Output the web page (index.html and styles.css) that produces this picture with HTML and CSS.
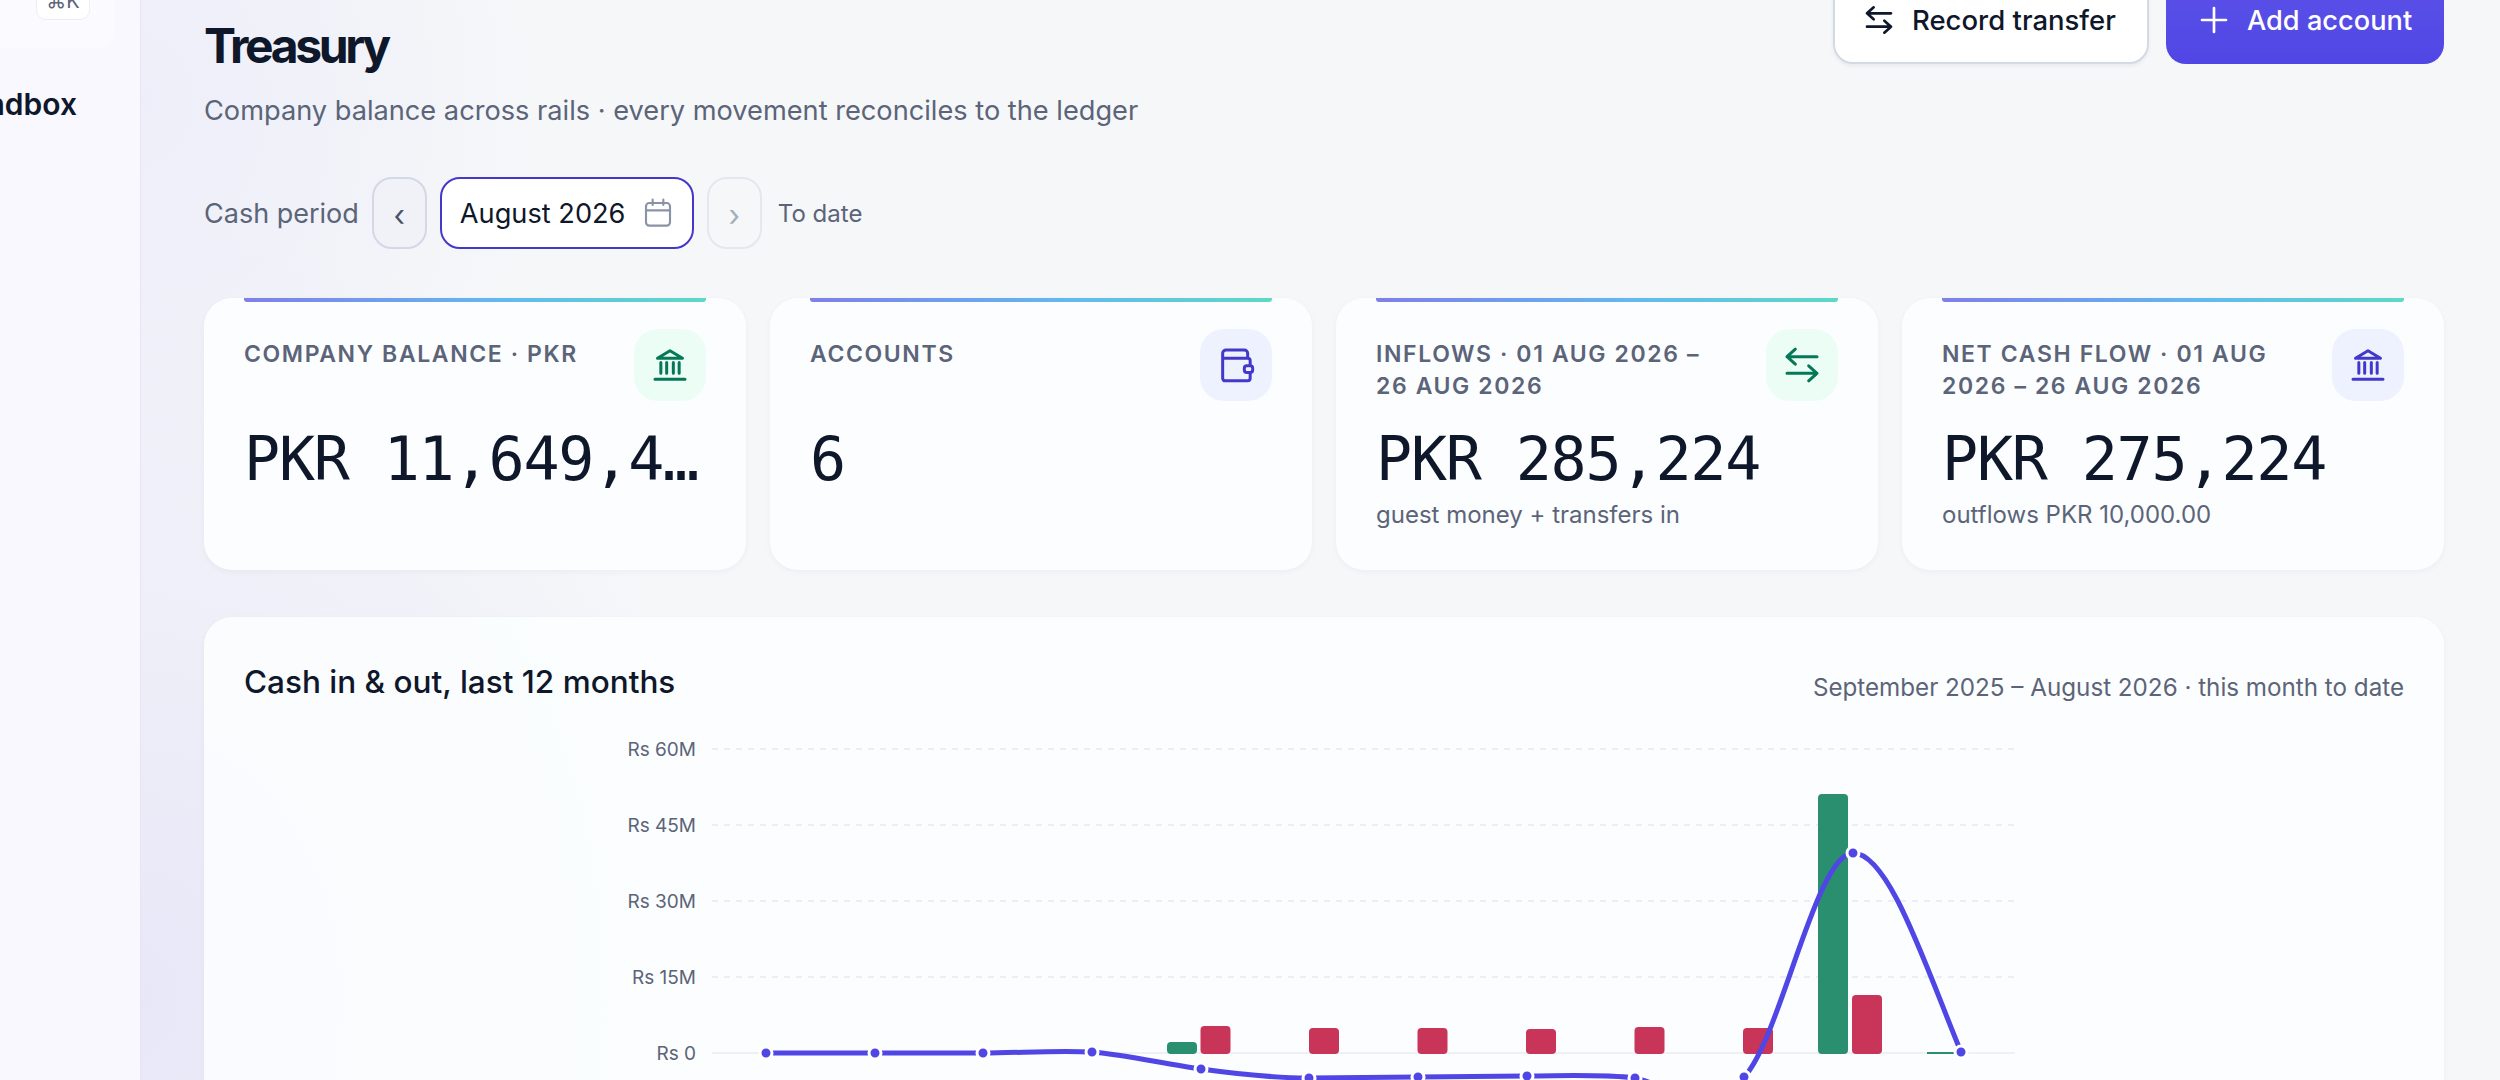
FILE: index.html
```html
<!DOCTYPE html>
<html lang="en">

<head>
  <meta charset="UTF-8">
  <meta name="viewport" content="width=device-width, initial-scale=1.0">
  <title>Treasury</title>
  <link rel="stylesheet" href="styles.css">
</head>

<body>
  <div class="app">
    <aside class="sidebar">
      <div class="search-box">
        <span class="kbd">⌘K</span>
      </div>
      <div class="workspace">Sandbox</div>
    </aside>

    <main class="main">
      <div class="page-head">
        <div>
          <h1>Treasury</h1>
          <p class="subtitle">Company balance across rails · every movement reconciles to the ledger</p>
        </div>
        <div class="actions">
          <button class="btn btn-light">
            <svg class="btn-icon" viewBox="0 0 24 24">
              <path d="M21 7H3M8 2.500 3 7l5 4.500M3 17h18M16 12.500l5 4.500-5 4.500" />
            </svg>
            Record transfer
          </button>
          <button class="btn btn-primary">
            <svg class="btn-icon" viewBox="0 0 24 24">
              <path d="M12 3v18M3 12h18" />
            </svg>
            Add account
          </button>
        </div>
      </div>

      <div class="period-row">
        <span class="period-label">Cash period</span>
        <button class="nav-btn">‹</button>
        <div class="date-box">
          August 2026
          <svg class="cal-icon" viewBox="0 0 24 24">
            <rect x="3" y="4.500" width="18" height="17" rx="2.500" />
            <path d="M3 10h18M8 2v4M16 2v4" />
          </svg>
        </div>
        <button class="nav-btn nav-disabled">›</button>
        <span class="period-note">To date</span>
      </div>

      <section class="stats">
        <div class="stat">
          <div class="stat-strip"></div>
          <div class="stat-body">
            <div class="stat-head">
              <div class="stat-label">COMPANY BALANCE · PKR</div>
              <div class="stat-icon icon-green">
                <svg viewBox="0 0 24 24">
                  <path class="roof" d="M12 3.500 19.500 8h-15z" />
                  <path d="M6.500 10.500V17M10 10.500V17M14 10.500V17M17.500 10.500V17M3 20.500h18" />
                </svg>
              </div>
            </div>
            <div class="stat-value">PKR 11,649,444</div>
          </div>
        </div>

        <div class="stat">
          <div class="stat-strip"></div>
          <div class="stat-body">
            <div class="stat-head">
              <div class="stat-label">ACCOUNTS</div>
              <div class="stat-icon icon-indigo">
                <svg viewBox="0 0 24 24">
                  <path d="M4 8h15a1.500 1.500 0 0 1 1.500 1.500V20a1.500 1.500 0 0 1-1.500 1.500H5.500A1.500 1.500 0 0 1 4 20V5a2 2 0 0 1 2-2h11a2 2 0 0 1 2 2v3" />
                  <rect class="clasp" x="17" y="12.500" width="5" height="4" rx="1.500" />
                </svg>
              </div>
            </div>
            <div class="stat-value">6</div>
          </div>
        </div>

        <div class="stat">
          <div class="stat-strip"></div>
          <div class="stat-body">
            <div class="stat-head">
              <div class="stat-label">INFLOWS · 01 AUG 2026 – 26 AUG 2026</div>
              <div class="stat-icon icon-green">
                <svg viewBox="0 0 24 24">
                  <path d="M21 7H3M8 2.500 3 7l5 4.500M3 17h18M16 12.500l5 4.500-5 4.500" />
                </svg>
              </div>
            </div>
            <div class="stat-value">PKR 285,224</div>
            <div class="stat-sub">guest money + transfers in</div>
          </div>
        </div>

        <div class="stat">
          <div class="stat-strip"></div>
          <div class="stat-body">
            <div class="stat-head">
              <div class="stat-label">NET CASH FLOW · 01 AUG 2026 – 26 AUG 2026</div>
              <div class="stat-icon icon-indigo">
                <svg viewBox="0 0 24 24">
                  <path class="roof" d="M12 3.500 19.500 8h-15z" />
                  <path d="M6.500 10.500V17M10 10.500V17M14 10.500V17M17.500 10.500V17M3 20.500h18" />
                </svg>
              </div>
            </div>
            <div class="stat-value">PKR 275,224</div>
            <div class="stat-sub">outflows PKR 10,000.00</div>
          </div>
        </div>
      </section>

      <section class="chart-card">
        <div class="chart-head">
          <h2>Cash in &amp; out, last 12 months</h2>
          <span class="chart-range">September 2025 – August 2026 · this month to date</span>
        </div>
        <svg class="chart" viewBox="244 720 2160 400">
          <g class="grid">
            <line x1="712" x2="2015" y1="749" y2="749" />
            <line x1="712" x2="2015" y1="825" y2="825" />
            <line x1="712" x2="2015" y1="901" y2="901" />
            <line x1="712" x2="2015" y1="977" y2="977" />
          </g>
          <line class="baseline" x1="712" x2="2015" y1="1053" y2="1053" />
          <g class="ticks">
            <text x="696" y="756">Rs 60M</text>
            <text x="696" y="832">Rs 45M</text>
            <text x="696" y="908">Rs 30M</text>
            <text x="696" y="984">Rs 15M</text>
            <text x="696" y="1060">Rs 0</text>
          </g>
          <g class="bars-in">
            <rect x="1167" y="1042" width="30" height="12" rx="4" />
            <rect x="1818" y="794" width="30" height="260" rx="4" />
            <rect x="1927" y="1052" width="30" height="2" />
          </g>
          <g class="bars-out">
            <rect x="1200.500" y="1026" width="30" height="28" rx="4" />
            <rect x="1309" y="1028" width="30" height="26" rx="4" />
            <rect x="1417.500" y="1028" width="30" height="26" rx="4" />
            <rect x="1526" y="1029" width="30" height="25" rx="4" />
            <rect x="1634.500" y="1027" width="30" height="27" rx="4" />
            <rect x="1743" y="1028" width="30" height="26" rx="4" />
            <rect x="1852" y="995" width="30" height="59" rx="4" />
          </g>
          <path class="net-line" d="M766 1053C802 1053 838 1053 875 1053C911 1053 947 1053 983 1053C1019 1053 1056 1050 1092 1052C1128 1055 1164 1064 1201 1069C1237 1074 1273 1078 1309 1078C1345 1078 1382 1077 1418 1077C1454 1077 1490 1076 1527 1076C1563 1076 1599 1074 1635 1078C1671 1086 1708 1120 1744 1077C1780 1040 1816 853 1853 853C1889 853 1925 965 1961 1052" />
          <g class="net-dots">
            <circle cx="766" cy="1053" r="6" />
            <circle cx="875" cy="1053" r="6" />
            <circle cx="983" cy="1053" r="6" />
            <circle cx="1092" cy="1052" r="6" />
            <circle cx="1201" cy="1069" r="6" />
            <circle cx="1309" cy="1078" r="6" />
            <circle cx="1418" cy="1077" r="6" />
            <circle cx="1527" cy="1076" r="6" />
            <circle cx="1635" cy="1078" r="6" />
            <circle cx="1744" cy="1077" r="6" />
            <circle cx="1853" cy="853" r="6" />
            <circle cx="1961" cy="1052" r="6" />
          </g>
        </svg>
      </section>
    </main>
  </div>
</body>

</html>
```
FILE: styles.css
```css
* {
  margin: 0;
  padding: 0;
  box-sizing: border-box;
}

html,
body {
  height: 100%;
  overflow: hidden;
}

body {
  font-family: Inter, "Liberation Sans", sans-serif;
  color: #0f172a;
  background:
    radial-gradient(600px 800px at 140px 1000px, #e8e7f8, transparent),
    radial-gradient(400px 500px at 140px 100px, #edeef9, transparent),
    #f5f7f9;
}

.app {
  display: flex;
  height: 1080px;
}

/* Sidebar, cut off on its left edge */
.sidebar {
  width: 141px;
  flex-shrink: 0;
  display: flex;
  flex-direction: column;
  align-items: flex-end;
  overflow: hidden;
  background: #f8f8fe;
  border-right: 1px solid #e6e6f2;
}

.search-box {
  display: flex;
  justify-content: flex-end;
  align-items: flex-end;
  width: 160px;
  height: 48px;
  margin-right: 25px;
  padding: 0 25px 28px 0;
  flex-shrink: 0;
  background: #fbfbff;
  border-radius: 0 0 16px 0;
}

.kbd {
  display: flex;
  align-items: flex-end;
  justify-content: center;
  flex-shrink: 0;
  width: 54px;
  height: 40px;
  padding-bottom: 6px;
  font-size: 20px;
  color: #5b6478;
  background: #fff;
  border: 1px solid #edeef5;
  border-radius: 10px;
}

.workspace {
  margin-top: 38px;
  margin-right: 63px;
  font-size: 30px;
  font-weight: 600;
  white-space: nowrap;
}

.main {
  flex: 1;
  min-width: 0;
  padding: 0 56px 0 63px;
}

.page-head {
  display: flex;
  justify-content: space-between;
  align-items: flex-start;
  margin-top: -24px;
}

h1 {
  margin-top: 38px;
  font-size: 48px;
  line-height: 64px;
  font-weight: 700;
  letter-spacing: -0.07em;
}

.subtitle {
  margin-top: 15px;
  font-size: 27.200px;
  line-height: 36px;
  color: #5b6478;
}

.actions {
  display: flex;
  gap: 17px;
}

.btn {
  display: flex;
  align-items: center;
  gap: 17px;
  height: 88px;
  font-family: inherit;
  font-size: 27.200px;
  font-weight: 500;
  border-radius: 20px;
}

.btn-icon {
  width: 32px;
  height: 32px;
  fill: none;
  stroke: currentColor;
  stroke-width: 2;
  stroke-linecap: round;
  stroke-linejoin: round;
}

.btn-light {
  width: 316px;
  padding-left: 28px;
  font-size: 27.500px;
  color: #0f172a;
  background: #fff;
  border: 2px solid #d3dae6;
  box-shadow: 0 2px 4px rgba(15, 23, 42, 0.06);
}

.btn-primary {
  width: 278px;
  padding-left: 32px;
  color: #fff;
  background: linear-gradient(#5c52e8, #4f46e5);
  border: 0;
}

.period-row {
  display: flex;
  align-items: center;
  gap: 14px;
  margin-top: 48px;
}

.period-label {
  font-size: 27px;
  color: #5b6478;
  margin-right: -1px;
}

.nav-btn {
  width: 55px;
  height: 72px;
  padding-top: 4px;
  font-family: inherit;
  font-size: 30px;
  color: #4b5468;
  background: #f0f2f8;
  border: 2px solid #d3d8e6;
  border-radius: 20px;
}

.nav-disabled {
  margin-left: -1px;
  color: #a6adbb;
  background: #f5f7f9;
  border-color: #e4e7ee;
}

.date-box {
  display: flex;
  align-items: center;
  justify-content: space-between;
  width: 254px;
  height: 72px;
  margin-left: -1px;
  padding: 0 18px;
  font-size: 27.200px;
  background: #fff;
  border: 2px solid #4338ca;
  border-radius: 20px;
}

.cal-icon {
  width: 32px;
  height: 32px;
  fill: none;
  stroke: #8a93a6;
  stroke-width: 1.600;
  stroke-linecap: round;
}

.period-note {
  margin-left: 2px;
  font-size: 24px;
  color: #5b6478;
}

.stats {
  display: grid;
  grid-template-columns: repeat(4, minmax(0, 1fr));
  gap: 24px;
  margin-top: 49px;
}

.stat {
  height: 272px;
  background: #fbfdfe;
  border-radius: 28px;
  box-shadow: 0 2px 6px rgba(15, 23, 42, 0.04);
}

.stat-strip {
  height: 4px;
  margin: 0 40px;
  background: linear-gradient(90deg, #7f7fe8, #63b8f2 55%, #5dd9c4);
  border-radius: 0 0 3px 3px;
}

.stat-body {
  padding: 27px 40px 0;
}

.stat-head {
  display: flex;
  justify-content: space-between;
  gap: 38px;
  height: 72px;
}

.stat-label {
  padding-top: 9px;
  font-size: 23px;
  line-height: 32px;
  font-weight: 600;
  letter-spacing: 0.07em;
  color: #5b6478;
}

.stat-icon {
  flex-shrink: 0;
  display: flex;
  align-items: center;
  justify-content: center;
  width: 72px;
  height: 72px;
  border-radius: 24px;
}

.stat-icon svg {
  width: 40px;
  height: 40px;
  fill: none;
  stroke: currentColor;
  stroke-width: 1.800;
  stroke-linecap: round;
  stroke-linejoin: round;
}

.stat-icon .clasp {
  fill: #eef2ff;
}

.icon-green {
  color: #047857;
  background: #ecfdf5;
}

.icon-indigo {
  color: #4338ca;
  background: #eef2ff;
}

.stat-value {
  margin-top: 22px;
  font-family: "DejaVu Sans Mono", monospace;
  font-size: 60px;
  line-height: 72px;
  letter-spacing: -0.02em;
  white-space: nowrap;
  overflow: hidden;
  text-overflow: ellipsis;
}

.stat-sub {
  margin-top: 4px;
  font-size: 24px;
  line-height: 32px;
  color: #5b6478;
}

.chart-card {
  margin-top: 47px;
  height: 600px;
  padding: 40px 40px 0;
  background: rgba(252, 254, 255, 0.85);
  border-radius: 28px;
  box-shadow: 0 2px 6px rgba(15, 23, 42, 0.04);
}

.chart-head {
  display: flex;
  justify-content: space-between;
  align-items: center;
  height: 48px;
  margin-bottom: 15px;
}

h2 {
  font-size: 31.500px;
  font-weight: 500;
}

.chart-range {
  padding-top: 12px;
  font-size: 24.200px;
  color: #5b6478;
}

.chart {
  display: block;
  width: 2160px;
  height: 400px;
}

.grid line {
  stroke: #eceef2;
  stroke-width: 2;
  stroke-dasharray: 6 6;
}

.baseline {
  stroke: #eef0f4;
  stroke-width: 2;
}

.ticks text {
  font-size: 19px;
  fill: #5b6478;
  text-anchor: end;
}

.bars-in rect {
  fill: #2a8f6f;
}

.bars-out rect {
  fill: #c93558;
}

.net-line {
  fill: none;
  stroke: #4f46e5;
  stroke-width: 5;
}

.net-dots circle {
  fill: #4f46e5;
  stroke: #fff;
  stroke-width: 3;
}
```
